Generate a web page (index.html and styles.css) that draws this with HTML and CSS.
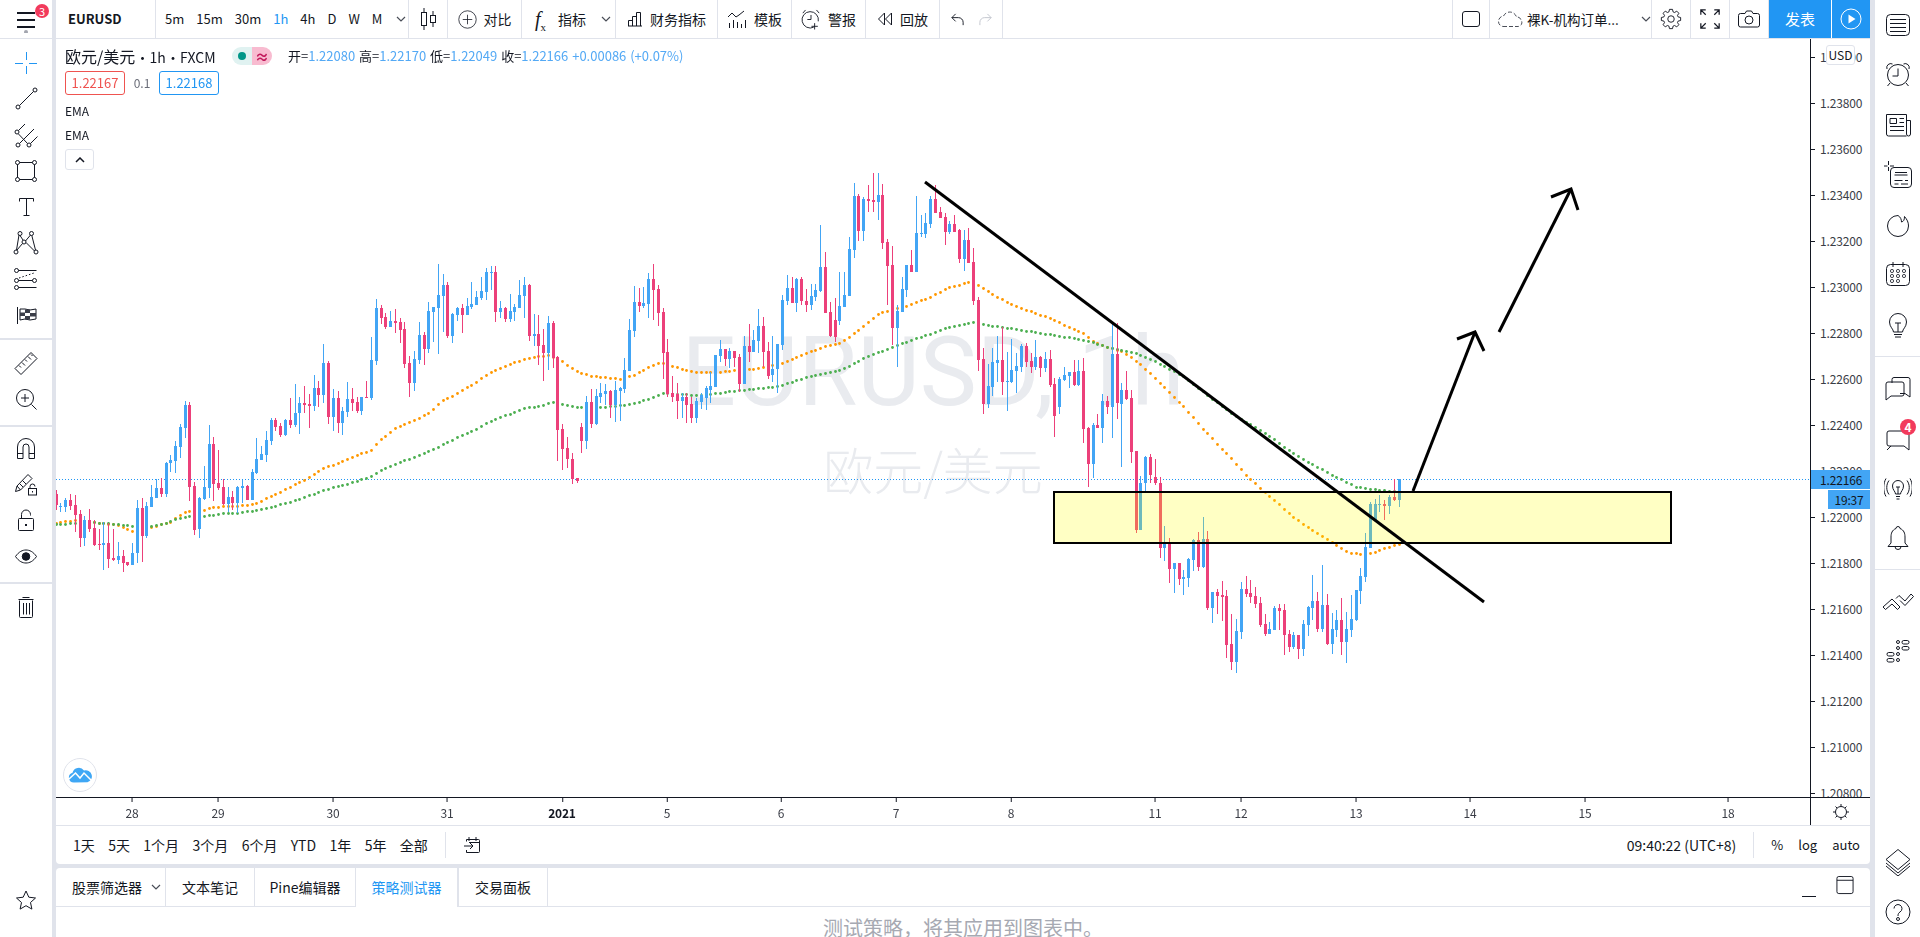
FILE: index.html
```html
<!DOCTYPE html>
<html>
<head>
  <meta charset="UTF-8" />
  <link rel="stylesheet" href="styles.css">
</head>
<body>
  <div class="app">
    <div class="left-col">
      <div class="menu-cell">
        <svg class="menu-icon" width="24" height="28" viewBox="0 0 24 28"><path d="M3 8h18M3 15h18M3 22h18"/><circle cx="12" cy="27" r="2"/></svg>
        <span class="menu-badge">3</span>
      </div>
      <div class="tools">
        <div class="tool-group first">
          <div class="tool"><svg class="ic blue" viewBox="0 0 28 28"><path d="M3 14.5h8M17 14.5h8M14.5 3v8M14.5 17v8"/></svg></div>
          <div class="tool"><svg class="ic" viewBox="0 0 28 28"><circle cx="6" cy="22" r="2"/><circle cx="23" cy="5" r="2"/><path d="M7.5 20.5 21.5 6.5"/></svg></div>
          <div class="tool"><svg class="ic" viewBox="0 0 28 28"><circle cx="5" cy="11" r="2"/><circle cx="6" cy="24" r="2"/><circle cx="17" cy="24" r="2"/><path d="M6.5 9.500 13 3M6.500 13 15.500 22.500M7.500 22.500 22 8M18.500 22.500 25.500 15.500"/></svg></div>
          <div class="tool"><svg class="ic" viewBox="0 0 28 28"><rect x="5.500" y="5.500" width="17" height="17"/><circle cx="5.500" cy="5.500" r="2" class="paper"/><circle cx="22.500" cy="5.500" r="2" class="paper"/><circle cx="5.500" cy="22.500" r="2" class="paper"/><circle cx="22.500" cy="22.500" r="2" class="paper"/></svg></div>
          <div class="tool"><svg class="ic" viewBox="0 0 28 28"><path d="M7.500 8.500V5.500h14v3M14.500 5.500v17M11.500 22.500h6"/></svg></div>
          <div class="tool"><svg class="ic" viewBox="0 0 28 28"><circle cx="8" cy="4.500" r="2"/><circle cx="19.500" cy="4.500" r="2"/><circle cx="12" cy="13" r="2"/><circle cx="4" cy="23" r="2"/><circle cx="24" cy="23" r="2"/><path d="M8 6.500 11 11M18.500 6 13.500 12M5 21 10.500 14.500M7 6 4.500 21M19.800 6.500 23.500 21M14 13.500 22.500 22"/></svg></div>
          <div class="tool"><svg class="ic" viewBox="0 0 28 28"><circle cx="4.500" cy="5.500" r="2"/><circle cx="4.500" cy="15.500" r="2"/><circle cx="4.500" cy="22.500" r="2"/><circle cx="22.500" cy="15.500" r="2"/><path d="M6.500 5.500h18M6.500 22.500h18M6.500 15.500h14"/><path class="dots" d="M7 13 22 8"/></svg></div>
          <div class="tool"><svg class="ic flag" viewBox="0 0 28 28"><path class="pole" d="M5.500 6v17"/><path class="cloth" d="M8 8h5l5 1 6-1v10l-6 1-5-1-5 1z"/><path class="check" d="M8 11.500h5v3.500H8zM13 8.500h5V12h-5zM18 12h6v3.500h-6zM13 15h5v3.500h-5z"/></svg></div>
        </div>
        <div class="tool-group roomy">
          <div class="tool"><svg class="ic" viewBox="0 0 28 28"><path d="M3 19.500 19 3.500l6 6-16 16zM7 16.500l2 2M10 13.500l3 3M13 10.500l2 2M16 7.500l3 3M19 5.500l1.500 1.500"/></svg></div>
          <div class="tool"><svg class="ic" viewBox="0 0 28 28"><circle cx="13" cy="13" r="8.500"/><path d="M13 9v8M9 13h8M19.500 19.500l5 5"/></svg></div>
        </div>
        <div class="tool-group roomy tight-top">
          <div class="tool"><svg class="ic" viewBox="0 0 28 28"><path d="M5.500 24.500V13a8.500 8.500 0 0 1 17 0v11.500h-5.500V13a3 3 0 0 0-6 0v11.500zM5.500 19.500H11M17 19.500h5.500"/></svg></div>
          <div class="tool"><svg class="ic" viewBox="0 0 28 28"><path d="M3.500 21.500 5 16 16 4.500l4 4L8.500 20zM5 16l3.500 4M7.500 13.500l3.500 3.500M10.500 10.500l3.500 3.500"/><rect x="16.500" y="18.500" width="8" height="6.500"/><path d="M18 18.500v-2a2.500 2.500 0 0 1 5 0"/><path d="M20.500 21v1.500"/></svg></div>
          <div class="tool"><svg class="ic" viewBox="0 0 28 28"><rect x="6.500" y="12.500" width="15" height="12" rx="1"/><path d="M9.500 12.500v-4a4.500 4.500 0 0 1 9 0v1"/><path d="M14 18v2" stroke-width="2"/></svg></div>
          <div class="tool"><svg class="ic" viewBox="0 0 28 28"><path d="M3.500 14.500C7 9.500 10.500 8 14 8s7 1.500 10.500 6.500C21 19.500 17.500 21 14 21s-7-1.500-10.500-6.500z"/><circle class="solid" cx="14" cy="14.500" r="3.800"/></svg></div>
        </div>
        <div class="tool-group">
          <div class="tool"><svg class="ic" viewBox="0 0 28 28"><path d="M7.500 7.500v16a1 1 0 0 0 1 1h11a1 1 0 0 0 1-1v-16M6.500 6.500h15M10.500 4.500h7M11.500 10v11.500M14.500 10v11.500M17.500 10v11.500"/></svg></div>
        </div>
        <div class="tool star"><svg class="ic" viewBox="0 0 28 28"><path d="M14 5l2.800 6.200 6.700.8-5 4.500 1.400 6.600L14 19.700l-5.900 3.400 1.400-6.600-5-4.500 6.700-.8z"/></svg></div>
      </div>
    </div>

    <div class="center-col">
      <div class="topbar">
        <div class="seg seg-symbol">EURUSD</div>
        <div class="seg seg-intervals">
          <span>5m</span><span>15m</span><span>30m</span><span class="active">1h</span><span>4h</span><span>D</span><span>W</span><span>M</span>
          <svg class="chev" viewBox="0 0 10 6"><path d="M1 1l4 4 4-4"/></svg>
        </div>
        <div class="seg seg-candle"><svg class="ic" viewBox="0 0 28 28"><path d="M10 3v22M19 6v16"/><rect x="7.500" y="7.500" width="5" height="13" class="paper"/><rect x="16.500" y="10.500" width="5" height="7" class="paper"/></svg></div>
        <div class="seg seg-compare"><svg class="ic" viewBox="0 0 24 24"><circle cx="12" cy="12" r="11"/><path d="M12 6v12M6 12h12"/></svg><span>对比</span></div>
        <div class="seg seg-indicator"><span class="fx">f<sub>x</sub></span><span>指标</span><svg class="chev" viewBox="0 0 10 6"><path d="M1 1l4 4 4-4"/></svg></div>
        <div class="seg seg-financial"><svg class="ic" viewBox="0 0 16 16"><path d="M1.500 15V9.500h4V15M5.500 15V5.500h4V15M9.500 15V1.500h4V15M1 15h14"/></svg><span>财务指标</span></div>
        <div class="seg seg-template"><svg class="ic" viewBox="0 0 20 20"><path d="M1 8l4-4 4 4 3-2 5-4M2.500 19v-5M6.500 19v-8M10.500 19v-6M14.500 19v-4M18.500 19v-8"/></svg><span>模板</span></div>
        <div class="seg seg-alert"><svg class="ic" viewBox="0 0 22 24"><path d="M14 20.500a9 9 0 1 1 5-6.500M11 7v5H7M2 5l3-3.500M20 5l-3-3.500M15 23v-7M11.500 19.500h7"/></svg><span>警报</span></div>
        <div class="seg seg-replay"><svg class="ic" viewBox="0 0 16 16"><path d="M7.500 2 1.500 8l6 6zM14.500 2l-6 6 6 6z"/></svg><span>回放</span></div>
        <div class="seg seg-undo">
          <svg class="ic" viewBox="0 0 16 16"><path d="M6 2 2 6l4 4M2 6h7a5 5 0 0 1 5 5v3"/></svg>
          <svg class="ic faded" viewBox="0 0 16 16"><path d="M10 2l4 4-4 4M14 6H7a5 5 0 0 0-5 5v3"/></svg>
        </div>
        <div class="topbar-fill"></div>
        <div class="seg seg-square"><svg class="ic" viewBox="0 0 20 18"><rect x="1.500" y="1.500" width="17" height="15" rx="2.500"/></svg></div>
        <div class="seg seg-layout">
          <svg class="ic cloud" viewBox="0 0 26 18"><path d="M6 16.500H21a4 4 0 0 0 3-6.500 4 4 0 0 0-4.500-3 7 7 0 0 0-13-1 5.500 5.500 0 0 0-5 5.500 5 5 0 0 0 4.500 5"/></svg>
          <span>裸K-机构订单...</span>
          <svg class="chev" viewBox="0 0 10 6"><path d="M1 1l4 4 4-4"/></svg>
        </div>
        <div class="seg seg-icon"><svg class="ic gear" viewBox="0 0 28 28"><path d="M11.800 6.310 12.360 3.630 15.640 3.630 16.200 6.310 17.880 7.010 20.170 5.510 22.490 7.830 20.990 10.120 21.690 11.800 24.370 12.360 24.370 15.640 21.690 16.200 20.990 17.880 22.490 20.170 20.170 22.490 17.880 20.990 16.200 21.690 15.640 24.370 12.360 24.370 11.800 21.690 10.120 20.990 7.830 22.490 5.510 20.170 7.010 17.880 6.310 16.200 3.630 15.640 3.630 12.360 6.310 11.800 7.010 10.120 5.510 7.830 7.830 5.510 10.120 7.010Z"/><circle cx="14" cy="14" r="3.500"/></svg></div>
        <div class="seg seg-icon"><svg class="ic" viewBox="0 0 18 18"><path d="M1.500 5.500v-4h4M1.500 1.500l4 4M12.500 1.500h4v4M16.500 1.500l-4 4M1.500 12.500v4h4M1.500 16.500l4-4M16.500 12.500v4h-4M16.500 16.500l-4-4"/></svg></div>
        <div class="seg seg-icon"><svg class="ic" viewBox="0 0 22 18"><path d="M7 3.500l1.500-2.500h5L15 3.500h4.500a2 2 0 0 1 2 2V15a2 2 0 0 1-2 2h-17a2 2 0 0 1-2-2V5.500a2 2 0 0 1 2-2z"/><circle cx="11" cy="10" r="4"/></svg></div>
        <div class="publish">发表</div>
        <div class="play"><svg class="ic" viewBox="0 0 22 22"><circle cx="11" cy="11" r="10"/><path class="play-mark" d="M8.500 6.500 15.500 11l-7 4.500z"/></svg></div>
      </div>

      <div class="chart">
        <div class="plot">
          <div class="watermark">
            <div class="wm-main">EURUSD, 1h</div>
            <div class="wm-sub">欧元/美元</div>
          </div>
          <canvas id="plot" width="1754" height="758"></canvas>
          <div class="legend">
            <div class="legend-row">
              <span class="legend-title"><span class="legend-name">欧元/美元</span> · 1h · FXCM</span>
              <span class="pills"><span class="pill-a"><i></i></span><span class="pill-b">≈</span></span>
              <span class="ohlc">
                开=<b>1.22080</b> 高=<b>1.22170</b> 低=<b>1.22049</b> 收=<b>1.22166</b> <b>+0.00086 (+0.07%)</b>
              </span>
            </div>
            <div class="quote-row">
              <span class="quote sell">1.22167</span>
              <span class="spread">0.1</span>
              <span class="quote buy">1.22168</span>
            </div>
            <div class="study">EMA</div>
            <div class="study">EMA</div>
            <div class="collapse"><svg viewBox="0 0 10 6" width="10" height="6"><path d="M1 5l4-4 4 4"/></svg></div>
          </div>
          <div class="chart-logo">
            <svg viewBox="0 0 24 16" width="24" height="16"><path d="M6 15.500a5 5 0 0 1-1.500-9.800A6.500 6.500 0 0 1 16 3.500a5.500 5.500 0 0 1 3.500 11.800z"/><path class="logo-line" d="M1 12 7.500 6l4.500 5 4-5 7 7"/></svg>
          </div>
        </div>
        <div class="price-axis">
          <div class="price-list">
            <span>1.24000</span><span>1.23800</span><span>1.23600</span><span>1.23400</span><span>1.23200</span><span>1.23000</span><span>1.22800</span><span>1.22600</span><span>1.22400</span><span>1.22200</span><span>1.22000</span><span>1.21800</span><span>1.21600</span><span>1.21400</span><span>1.21200</span><span>1.21000</span><span>1.20800</span>
          </div>
          <span class="usd-chip">USD</span>
          <span class="price-tag">1.22166</span>
          <span class="count-tag">19:37</span>
        </div>
        <div class="time-axis">
          <span class="tick" style="left:76px">28</span>
          <span class="tick" style="left:162px">29</span>
          <span class="tick" style="left:277px">30</span>
          <span class="tick" style="left:391px">31</span>
          <span class="tick year" style="left:506px">2021</span>
          <span class="tick" style="left:611px">5</span>
          <span class="tick" style="left:725px">6</span>
          <span class="tick" style="left:840px">7</span>
          <span class="tick" style="left:955px">8</span>
          <span class="tick" style="left:1099px">11</span>
          <span class="tick" style="left:1185px">12</span>
          <span class="tick" style="left:1300px">13</span>
          <span class="tick" style="left:1414px">14</span>
          <span class="tick" style="left:1529px">15</span>
          <span class="tick" style="left:1672px">18</span>
        </div>
        <div class="axis-corner">
          <svg class="ic" viewBox="0 0 18 18"><circle cx="9" cy="9" r="5.500"/><path d="M9 1v2M9 15v2M1 9h2M15 9h2M3.500 3.500l1.500 1.500M13 13l1.500 1.500M3.500 14.500 5 13M13 5l1.500-1.500"/></svg>
        </div>
      </div>

      <div class="rangebar">
        <div class="ranges">
          <span>1天</span><span>5天</span><span>1个月</span><span>3个月</span><span>6个月</span><span>YTD</span><span>1年</span><span>5年</span><span>全部</span>
        </div>
        <div class="range-sep"></div>
        <svg class="ic goto" viewBox="0 0 18 18"><path d="M3.500 5.500V3.500h12a1 1 0 0 1 1 1v11a1 1 0 0 1-1 1h-12V14M6 1v4M13 1v4M6 6.500h10M1 10h9M7 7l3 3-3 3"/></svg>
        <div class="rangebar-fill"></div>
        <span class="clock">09:40:22 (UTC+8)</span>
        <div class="range-sep"></div>
        <div class="scale-opts"><span>%</span><span>log</span><span>auto</span></div>
      </div>

      <div class="bottom-panel">
        <div class="tabs">
          <div class="tab tab-screener">股票筛选器<svg class="chev" viewBox="0 0 10 6"><path d="M1 1l4 4 4-4"/></svg></div>
          <div class="tab tab-notes">文本笔记</div>
          <div class="tab tab-pine">Pine编辑器</div>
          <div class="tab tab-tester active">策略测试器</div>
          <div class="tab tab-trade">交易面板</div>
          <div class="tabs-fill"></div>
          <svg class="ic panel-min" viewBox="0 0 14 14"><path d="M0 13.500h14"/></svg>
          <svg class="ic panel-max" viewBox="0 0 18 20"><rect x="0.500" y="0.500" width="17" height="18" rx="2"/><path d="M0.500 4.500h17"/></svg>
        </div>
        <div class="panel-body">测试策略，将其应用到图表中。</div>
      </div>
    </div>

    <div class="right-col">
      <div class="side-group top">
        <div class="side-btn"><svg class="ic" viewBox="0 0 28 28"><rect x="2.500" y="3.500" width="23" height="21" rx="4"/><path d="M6 8.500h16M6 12.500h16M6 16.500h16M6 20.500h16"/></svg></div>
        <div class="side-btn"><svg class="ic" viewBox="0 0 28 28"><circle cx="14" cy="14" r="10.500"/><path d="M14 7.500v7.500H8.500M3 8a4 4 0 0 1 5.500-5M25 8a4 4 0 0 0-5.500-5M6 22l-2.500 3M22 22l2.500 3"/></svg></div>
        <div class="side-btn"><svg class="ic" viewBox="0 0 28 28"><path d="M22.500 25h-18a2 2 0 0 1-2-2V3.500h20V23a2 2 0 0 0 2 2 2 2 0 0 0 2-2V9.500h-4M6 7.500h6.500v5H6zM15.500 7.500H20M15.500 11.500H20M6 15.500h14M6 19.500h14"/></svg></div>
        <div class="side-btn"><svg class="ic" viewBox="0 0 28 28"><rect x="6.500" y="6.500" width="21" height="20" rx="3.500"/><path d="M11 11.500h12M10.500 14h13M10.500 19.500h8M21 19.500h3M10.500 23h4M17 23h7M4.500 0v4M4.500 6v4M0 5h3.500M6 5h4"/></svg></div>
        <div class="side-btn"><svg class="ic" viewBox="0 0 28 28"><path d="M14 4.500A10.500 10.500 0 1 0 24.500 15c0-4-1.500-6.500-4-9.500 0 3.500-1 5-3 5.500 0-2.500-1-5-3.500-6.500z"/></svg></div>
        <div class="side-btn"><svg class="ic" viewBox="0 0 28 28"><rect x="2.500" y="3.500" width="23" height="21" rx="4"/><path d="M9 1v5M19 1v5"/><g class="solid-dots"><circle cx="8" cy="10" r="1.600"/><circle cx="14" cy="10" r="1.600"/><circle cx="20" cy="10" r="1.600"/><circle cx="8" cy="15" r="1.600"/><circle cx="14" cy="15" r="1.600"/><circle cx="20" cy="15" r="1.600"/><circle cx="8" cy="20" r="1.600"/><circle cx="14" cy="20" r="1.600"/></g></svg></div>
        <div class="side-btn"><svg class="ic" viewBox="0 0 28 28"><path d="M9.500 21c0-3-4-5-4-10a8.500 8.500 0 0 1 17 0c0 5-4 7-4 10zM14 21v-9M11 12h6M10 23.500h8M11 26h6"/></svg></div>
      </div>
      <div class="side-group">
        <div class="side-btn"><svg class="ic" viewBox="0 0 28 28"><path d="M8 9V5.500a2 2 0 0 1 2-2h14a2 2 0 0 1 2 2V23l-5-3.500H16M2 10a2 2 0 0 1 2-2h14a2 2 0 0 1 2 2v10a2 2 0 0 1-2 2H7l-5 4z"/></svg></div>
        <div class="side-btn">
          <svg class="ic" viewBox="0 0 28 28"><path d="M25 26l-5-4H5a2 2 0 0 1-2-2V9a2 2 0 0 1 2-2h18a2 2 0 0 1 2 2z M3 26l4-4"/></svg>
          <span class="side-badge">4</span>
        </div>
        <div class="side-btn"><svg class="ic" viewBox="0 0 28 28"><path d="M11.500 20c0-2.500-3-4-3-8a5.500 5.500 0 0 1 11 0c0 4-3 5.500-3 8zM14 20v-7M12 13h4M12 22.500h4M12.500 25h3M5 6.500c-3 4-3 10 0 14M2 4.500c-3 5-3 13 0 18M23 6.500c3 4 3 10 0 14M26 4.500c3 5 3 13 0 18"/></svg></div>
        <div class="side-btn"><svg class="ic" viewBox="0 0 28 28"><path d="M14 2.500a2 2 0 0 0-2 2C8 6 7 9.500 7 13v6l-3 3.500h20L21 19v-6c0-3.500-1-7-5-8.500a2 2 0 0 0-2-2zM11 22.500a3 3 0 0 0 6 0"/></svg></div>
      </div>
      <div class="side-group">
        <div class="side-btn"><svg class="ic wide" viewBox="0 0 32 24"><path d="M1 18 10 10l8 8-2.500 2.500L10 15l-6.500 5.500zM14 9.500l3-3 6 5.500 6-7 2.500 2.500-8.500 9-5-5"/></svg></div>
        <div class="side-btn"><svg class="ic" viewBox="0 0 28 28"><rect x="18" y="3.500" width="7" height="3.500" rx="1.700"/><rect x="18" y="9.500" width="7" height="3.500" rx="1.700"/><rect x="3" y="15.500" width="7" height="3.500" rx="1.700"/><rect x="3" y="21.500" width="7" height="3.500" rx="1.700"/><circle cx="14" cy="5" r="1.500"/><circle cx="14" cy="11" r="1.500"/><circle cx="14" cy="17" r="1.500"/><circle cx="14" cy="23" r="1.500"/></svg></div>
      </div>
      <div class="side-group bottom">
        <div class="side-btn"><svg class="ic" viewBox="0 0 28 28"><path d="M14 1.500 26 11.500 14 21.500 2 11.500zM2 15 14 25 26 15M2 18 14 28 26 18"/></svg></div>
        <div class="side-btn"><svg class="ic" viewBox="0 0 28 28"><circle cx="14" cy="14" r="12"/><path d="M10 10.500a4 4 0 1 1 6 3.500c-1.500 1-2 2-2 4"/><circle cx="14" cy="21" r="1.500"/></svg></div>
      </div>
    </div>
  </div>

  <script src="chart.js"></script>
</body>
</html>
```

FILE: styles.css
```css
:root {
  --gap-color: #e0e3eb;
  --line-color: #e0e3eb;
  --text-color: #131722;
  --blue: #2196f3;
}

* {
  box-sizing: border-box;
}

html, body {
  margin: 0;
  height: 100%;
  overflow: hidden;
}

body {
  font-family: "Noto Sans CJK SC", Roboto, sans-serif;
  font-size: 14px;
  line-height: 20px;
  color: var(--text-color);
  background: var(--gap-color);
}

.app {
  display: flex;
  height: 937px;
  width: 1920px;
}

.ic {
  display: block;
  fill: none;
  stroke: currentColor;
  stroke-width: 1;
  flex: none;
}

.chev {
  width: 10px;
  height: 6px;
  fill: none;
  stroke: #4a4e58;
  stroke-width: 1.2;
  flex: none;
}

.paper {
  fill: #fff;
}

/* left column */
.left-col {
  width: 52px;
  margin-right: 4px;
  display: flex;
  flex-direction: column;
}

.menu-cell {
  position: relative;
  height: 38px;
  margin-bottom: 1px;
  background: #fff;
}

.menu-icon {
  position: absolute;
  left: 14px;
  top: 5px;
  fill: none;
  stroke: var(--text-color);
  stroke-width: 2;
}

.menu-icon circle {
  fill: #a3a6af;
  stroke: none;
}

.menu-badge {
  position: absolute;
  left: 35px;
  top: 4px;
  width: 14px;
  height: 14px;
  border-radius: 50%;
  background: #f23a5c;
  color: #fff;
  font-size: 11px;
  line-height: 14px;
  text-align: center;
}

.tools {
  flex: 1;
  background: #fff;
  display: flex;
  flex-direction: column;
  padding-top: 1px;
}

.tool-group {
  padding: 5px 0;
  border-bottom: 2px solid var(--line-color);
}

.tool-group.roomy {
  padding-bottom: 8px;
}

.tool-group.tight-top {
  padding-top: 3px;
}

.tool-group:nth-child(4) {
  border-bottom: none;
}

.tool {
  height: 36px;
  display: flex;
  align-items: center;
  justify-content: center;
}

.tool .ic {
  width: 28px;
  height: 28px;
}

.tool.star {
  margin-top: auto;
  margin-bottom: 19px;
}

.blue {
  color: var(--blue);
}

.dots {
  stroke-dasharray: 1.5 2;
}

.solid {
  fill: var(--text-color);
}

.flag .cloth {
  fill: #fff;
}

.flag .check {
  fill: #3a3d48;
  stroke: none;
}

/* center column */
.center-col {
  flex: none;
  width: 1814px;
  display: flex;
  flex-direction: column;
}

.topbar {
  height: 38px;
  margin-bottom: 1px;
  display: flex;
  background: #fff;
  white-space: nowrap;
}

.seg {
  display: flex;
  align-items: center;
  justify-content: center;
  border-right: 1px solid var(--line-color);
  gap: 7px;
  flex: none;
}

.seg-symbol {
  width: 100px;
  justify-content: flex-start;
  padding-left: 12px;
  font-weight: 700;
  font-size: 13px;
}

.seg-intervals {
  width: 253px;
  justify-content: flex-start;
  padding-left: 9px;
  gap: 12px;
  font-size: 13px;
}

.seg-intervals .active {
  color: var(--blue);
}

.seg-intervals .chev {
  margin-left: 2px;
}

.seg-candle {
  width: 39px;
}

.seg-candle .ic {
  width: 28px;
  height: 28px;
}

.seg-compare {
  width: 74px;
}

.seg-compare .ic {
  width: 19px;
  height: 19px;
}

.seg-indicator {
  width: 94px;
  gap: 8px;
  justify-content: flex-start;
  padding-left: 13px;
}

.seg-indicator .chev {
  margin-left: 7px;
}

.fx {
  font-family: "Liberation Serif", serif;
  font-style: italic;
  font-size: 20px;
  width: 15px;
}

.fx sub {
  font-size: 11px;
  font-style: normal;
  line-height: 0;
}

.seg-financial {
  width: 102px;
}

.seg-financial .ic {
  width: 16px;
  height: 16px;
}

.seg-template {
  width: 74px;
}

.seg-template .ic {
  width: 20px;
  height: 20px;
}

.seg-alert {
  width: 74px;
}

.seg-alert .ic {
  width: 20px;
  height: 23px;
}

.seg-replay {
  width: 74px;
}

.seg-replay .ic {
  width: 16px;
  height: 16px;
}

.seg-undo {
  width: 63px;
  gap: 13px;
}

.seg-undo .ic {
  width: 15px;
  height: 15px;
}

.faded {
  color: #c1c4cd;
}

.topbar-fill {
  flex: 1;
}

.seg-square {
  width: 38px;
  border-left: 1px solid var(--line-color);
}

.seg-square .ic {
  width: 20px;
  height: 18px;
}

.seg-layout {
  width: 162px;
  justify-content: flex-start;
  padding-left: 7px;
  gap: 4px;
}

.seg-layout span {
  width: 94px;
  font-size: 13.500px;
}

.seg-layout .chev {
  margin-left: 17px;
}

.cloud {
  width: 26px;
  height: 18px;
  stroke-dasharray: 4 2;
  color: #4a4e58;
}

.seg-icon {
  width: 39px;
}

.seg-icon .ic {
  width: 22px;
  height: 22px;
}

.seg-icon .gear {
  width: 26px;
  height: 26px;
}

.publish {
  width: 63px;
  background: var(--blue);
  color: #fff;
  font-size: 15px;
  display: flex;
  align-items: center;
  justify-content: center;
  flex: none;
  border-right: 1px solid #fff;
}

.play {
  width: 38px;
  background: var(--blue);
  display: flex;
  align-items: center;
  justify-content: center;
  color: #fff;
  flex: none;
}

.play .ic {
  width: 22px;
  height: 22px;
}

.play-mark {
  fill: #fff;
  stroke: none;
}

/* chart */
.chart {
  display: grid;
  grid-template-columns: 1754px 60px;
  grid-template-rows: 759px 27px;
  background: #fff;
}

.plot {
  position: relative;
  overflow: hidden;
  border-bottom: 1px solid #131722;
}

#plot {
  position: absolute;
  left: 0;
  top: 0;
}

.watermark {
  position: absolute;
  left: 0;
  right: 0;
  top: 278px;
  text-align: center;
  color: #e9ebef;
}

.wm-main {
  font-family: Roboto, sans-serif;
  font-size: 96px;
  line-height: 110px;
}

.wm-sub {
  font-size: 50px;
  line-height: 68px;
  font-weight: 300;
  margin-top: 7px;
}

.legend {
  position: absolute;
  left: 9px;
  top: 7px;
  display: flex;
  flex-direction: column;
  align-items: flex-start;
}

.legend-row {
  height: 20px;
  display: flex;
  align-items: center;
  white-space: nowrap;
}

.legend-title {
  font-size: 14px;
  width: 167px;
  word-spacing: -3px;
}

.legend-name {
  font-size: 16px;
}

.pills {
  display: flex;
  width: 40px;
  height: 18px;
  margin-right: 16px;
  border-radius: 9px;
  overflow: hidden;
}

.pill-a {
  flex: 1;
  background: #e0f2f1;
  display: flex;
  align-items: center;
  justify-content: center;
}

.pill-a i {
  width: 8px;
  height: 8px;
  border-radius: 50%;
  background: #009688;
}

.pill-b {
  flex: 1;
  background: #f8bbd0;
  color: #c2185b;
  font-size: 14px;
  font-weight: 700;
  line-height: 18px;
  text-align: center;
}

.ohlc {
  font-size: 13px;
  word-spacing: 1px;
}

.ohlc b {
  font-weight: 400;
  color: #53a9f5;
}

.quote-row {
  display: flex;
  align-items: center;
  margin-top: 5px;
  height: 24px;
}

.quote {
  width: 60px;
  height: 24px;
  border: 1px solid;
  border-radius: 3px;
  font-size: 13px;
  line-height: 22px;
  text-align: center;
  background: #fff;
}

.quote.sell {
  color: #ef5350;
}

.quote.buy {
  color: var(--blue);
}

.spread {
  font-size: 12px;
  color: #6a6d78;
  width: 34px;
  text-align: center;
}

.study {
  height: 24px;
  line-height: 24px;
  font-size: 12px;
}

.quote-row + .study {
  margin-top: 4px;
}

.collapse {
  width: 29px;
  height: 21px;
  margin-top: 2px;
  border: 1px solid var(--line-color);
  border-radius: 3px;
  background: #fff;
  display: flex;
  align-items: center;
  justify-content: center;
}

.collapse svg {
  fill: none;
  stroke: var(--text-color);
  stroke-width: 1.500;
}

.chart-logo {
  position: absolute;
  left: 7px;
  top: 719px;
  width: 34px;
  height: 34px;
  border: 1px solid var(--line-color);
  border-radius: 50%;
  background: #fff;
  display: flex;
  align-items: center;
  justify-content: center;
}

.chart-logo path {
  fill: #3fa7f5;
}

.chart-logo .logo-line {
  fill: none;
  stroke: #fff;
  stroke-width: 1.500;
}

.price-axis {
  position: relative;
  overflow: hidden;
  border-left: 1px solid #131722;
  border-bottom: 1px solid #131722;
}

.price-list {
  margin-top: -5px;
  display: flex;
  flex-direction: column;
}

.price-list span {
  height: 46px;
  display: flex;
  align-items: center;
  gap: 5px;
  font-size: 12px;
  letter-spacing: -0.150px;
  color: #3a3d46;
}

.price-list span::before {
  content: "";
  width: 4px;
  height: 1px;
  background: #131722;
}

.usd-chip {
  position: absolute;
  left: 15px;
  top: 6px;
  width: 29px;
  height: 20px;
  border: 1px solid var(--line-color);
  border-radius: 3px;
  background: #fff;
  font-size: 12px;
  line-height: 18px;
  text-align: center;
}

.price-tag,
.count-tag {
  position: absolute;
  right: 0;
  height: 19px;
  background: #42a5f5;
  font-size: 12px;
  line-height: 19px;
  letter-spacing: -0.150px;
  color: #131722;
}

.price-tag {
  top: 431px;
  left: 0;
  padding-left: 9px;
}

.count-tag {
  top: 451px;
  width: 42px;
  text-align: center;
}

.time-axis {
  position: relative;
  background: #fff;
}

.tick {
  position: absolute;
  top: 5px;
  transform: translateX(-50%);
  font-size: 12px;
  line-height: 20px;
  letter-spacing: -0.200px;
  color: #3a3d46;
}

.tick::before {
  content: "";
  position: absolute;
  left: 50%;
  top: -5px;
  width: 1px;
  height: 4px;
  background: #131722;
}

.tick.year {
  font-weight: 700;
  color: #131722;
}

.axis-corner {
  border-left: 1px solid #131722;
  background: #fff;
  display: flex;
  align-items: center;
  justify-content: center;
}

.axis-corner .ic {
  width: 18px;
  height: 18px;
}

/* range bar */
.rangebar {
  height: 39px;
  border-top: 1px solid var(--line-color);
  background: #fff;
  border-radius: 0 0 4px 4px;
  display: flex;
  align-items: center;
  font-size: 14px;
  padding-left: 17px;
  margin-bottom: 4px;
  white-space: nowrap;
}

.ranges {
  display: flex;
  gap: 13.400px;
}

.range-sep {
  width: 1px;
  height: 26px;
  background: var(--line-color);
  margin: 0 17px;
}

.goto {
  width: 18px;
  height: 18px;
}

.rangebar-fill {
  flex: 1;
}

.scale-opts {
  display: flex;
  gap: 15px;
  padding-right: 10px;
  font-size: 13px;
}

/* bottom panel */
.bottom-panel {
  flex: 1;
  background: #fff;
  border-radius: 4px 4px 0 0;
  display: flex;
  flex-direction: column;
  overflow: hidden;
}

.tabs {
  height: 39px;
  display: flex;
  align-items: center;
  border-bottom: 1px solid var(--line-color);
}

.tab {
  height: 100%;
  display: flex;
  align-items: center;
  justify-content: center;
  border-right: 1px solid var(--line-color);
  gap: 10px;
  flex: none;
}

.tab-screener { width: 110px; padding-left: 16px; gap: 9px; justify-content: flex-start; }
.tab-notes { width: 89px; }
.tab-pine { width: 101px; }
.tab-tester { width: 103px; }
.tab-trade { width: 89px; }

.tab.active {
  color: var(--blue);
  background: #fff;
  height: 39px;
  border-right-width: 2px;
}

.tabs-fill {
  flex: 1;
}

.panel-min {
  width: 14px;
  height: 14px;
  margin-right: 20px;
  margin-top: 5px;
}

.panel-max {
  width: 18px;
  height: 19px;
  margin-right: 16px;
  margin-top: -4px;
}

.panel-body {
  flex: 1;
  padding-top: 7px;
  text-align: center;
  font-size: 20px;
  line-height: 28px;
  color: #a6a9b2;
  white-space: nowrap;
}

/* right column */
.right-col {
  flex: none;
  width: 45px;
  margin-left: 5px;
  background: #fff;
  display: flex;
  flex-direction: column;
}

.side-group {
  padding: 6px 0;
  border-bottom: 1px solid var(--line-color);
}

.side-group.top {
  padding-top: 0;
}

.side-group:nth-child(3) {
  border-bottom: none;
}

.side-group.bottom {
  margin-top: auto;
  padding: 0;
  border: none;
}

.side-btn {
  position: relative;
  height: 50px;
  display: flex;
  align-items: center;
  justify-content: center;
}

.side-btn .ic {
  width: 28px;
  height: 28px;
}

.side-btn .ic.wide {
  width: 32px;
  height: 24px;
}

.side-badge {
  position: absolute;
  left: 25px;
  top: 6px;
  width: 16px;
  height: 16px;
  border-radius: 50%;
  background: #f23a5c;
  color: #fff;
  font-size: 12px;
  line-height: 16px;
  text-align: center;
  font-weight: 700;
}

.solid-dots circle {
  stroke: #131722;
  stroke-width: 0.800;
}
```

FILE: chart.js
```js
const canvas = document.getElementById('plot');
const ctx = canvas.getContext('2d');

// candles: [up, wickTop, bodyTop, bodyBottom, wickBottom]
const early = [
  [0,960,972,1005,1020],
  [1,1000,1007,1010,1025],[1,985,990,1010,1025],[0,972,990,1008,1020],[0,975,1005,1035,1085],[0,1020,1032,1103,1130],
  [1,1038,1050,1103,1127],[0,1017,1050,1077,1085],[0,1050,1075,1125,1127],[0,1077,1122,1125,1140],[1,1055,1120,1125,1200],
  [0,1060,1120,1166,1193],[0,1077,1164,1170,1172],[1,1117,1158,1170,1182],[0,1140,1158,1178,1205],[0,1175,1177,1185,1188],
  [1,1120,1150,1185,1185],[1,990,1015,1150,1178],[0,985,1015,1097,1175],[1,995,1008,1097,1103],[1,945,982,1010,1012],
  [1,927,955,983,985],[0,925,955,972,980],[1,877,880,972,980],[1,855,870,880,905],[1,813,828,873,908],
  [1,763,770,830,865],[1,693,705,773,803],[0,697,705,950,993],[0,937,948,1080,1095],[1,982,985,1078,1103],
  [1,888,950,987,990],[1,765,822,953,985],[0,800,822,942,993],[0,840,940,955,960],[0,928,950,1002,1005],
  [1,950,980,1003,1025],[0,962,980,1000,1020],[1,947,950,1000,1030],[1,930,948,955,1000],[0,945,948,990,990],
  [1,898,906,990,990],[1,805,867,910,912],[1,828,852,870,870],[1,783,810,855,875],[1,745,750,813,825],
  [0,745,750,770,783],[0,758,768,795,800],[1,747,750,795,797],[0,685,750,765,775],[1,642,728,765,770],
  [1,680,698,730,792],[0,648,698,705,730],[0,672,702,708,773],[1,615,654,708,722],[0,633,654,675,710],
  [1,522,578,675,698],[0,573,578,740,762],[1,657,685,740,782],[0,663,685,758,790],[1,712,723,758,795],
  [1,636,687,725,740],[0,655,687,698,722],[0,680,695,723,730],[1,682,682,723,735],[0,633,681,684,685],
  [1,502,570,684,690],[1,387,414,572,585],[0,405,414,443,462],[0,430,441,470,478],[1,423,453,470,472],
  [0,418,453,460,490],[0,445,456,480,518],[0,455,477,582,595],[0,558,580,638,680],[1,543,568,638,663],
  [1,456,495,570,582],[0,487,495,537,585],[1,395,423,537,550],[1,410,411,426,515],[1,282,375,413,551],
  [1,312,345,378,485],[0,337,345,498,503],[1,430,432,498,518],[1,410,415,435,452],[0,403,415,435,488],
  [1,384,408,435,435],[1,336,402,410,416],[1,363,380,405,405],[1,322,363,385,390],[1,293,306,365,390],
  [1,287,305,308,360],[0,288,306,425,455],[1,393,414,425,445],[0,410,414,447,455],[1,372,422,447,455],
  [1,402,411,425,452],[1,330,375,413,415],[1,322,345,378,443],[0,343,345,497,513],[1,432,492,498,528],
  [0,435,492,528,585],[0,477,525,548,632],[1,438,459,548,600],[0,453,459,563,593],[0,558,560,780,873],
  [0,762,777,836,900],[0,800,834,868,893],[0,850,866,927,942],[0,925,925,934,938],[0,758,771,813,850],
  [1,678,696,813,837],[0,658,696,762,775],[1,657,678,762,765],[1,640,669,681,700],[1,643,663,672,705],
  [0,660,663,705,743],[1,632,660,705,755],[1,650,655,663,752],[1,565,600,657,670],[1,447,480,602,603],
  [1,348,396,483,500],[0,353,396,408,425],[1,352,400,408,413],[1,310,327,403,445],[0,282,327,360,450],
  [0,345,357,428,467],[0,415,426,548,627],[0,507,546,672,680],[0,618,670,680,697],[0,640,672,692,748],
  [1,670,680,692,743],[0,670,680,705,758],[0,680,702,743,760],[1,685,693,743,760],
  [1,670,675,695,718],[1,648,655,685,720],[1,605,648,660,700],[1,555,555,650,650],[1,510,537,557,575],
  [0,537,537,567,587],[1,535,543,567,595],[0,545,543,563,590],[0,553,561,642,665],[1,498,528,642,640],
  [0,462,528,546,575],[1,480,510,546,545],[1,417,467,512,550],[0,440,468,545,590],[0,515,543,618,628],
  [1,497,597,615,637],[1,522,522,598,670],[1,376,390,525,540],[1,315,353,392,405],[0,320,355,398,400],
  [1,323,326,398,425],[0,320,328,392,405],[0,357,392,404,425],[1,342,378,404,420],[1,342,360,380,392],
  [1,165,292,362,365],[0,245,292,428,430],[0,395,426,498,500],[0,385,450,502,515],[1,305,408,452,465],
  [1,305,376,410,412],[1,200,237,377,378],[1,40,78,240,265],[0,72,78,183,212],[1,82,87,183,212],
  [0,45,88,92,125],[0,10,90,95,125],[1,10,75,95,150],[0,42,75,218,238],[0,208,216,288,405],
  [0,228,286,475,525],[1,405,422,475,590],[1,322,358,425,425],[1,285,285,360,380],[0,240,285,305,305],
  [1,78,190,305,305],[1,135,188,192,200],[1,130,160,192,205],[1,78,87,162,175],[0,45,88,128,128],
  [0,110,127,143,145],[0,130,142,185,225],[1,153,163,187,192],[0,135,162,185,185],[0,178,180,267,280],
  [1,180,210,267,302],[0,175,210,280,280],[0,235,276,392,405],[0,382,390,570,603],[0,535,568,702,732],
  [1,582,648,702,713],[1,535,576,650,678],[1,498,570,580,635],[0,472,570,635,675],[1,545,632,636,722],
  [1,508,600,636,638],[1,548,588,603,668],[1,522,528,590,605],[0,520,528,575,590],[0,550,573,590,608],
  [1,510,560,590,600],[0,557,560,595,622],[1,545,568,595,605],[0,540,568,645,652],[0,625,642,738,800],
  [1,622,628,710,732],[1,592,615,630,632],[1,605,607,617,655],[0,570,605,645,648],[1,570,603,645,648],
  [0,565,603,777,820],[0,770,775,882,950],[1,760,765,882,925],[0,732,765,773,775],[1,672,693,773,820],
  [0,678,693,710,732],[1,458,552,710,805],[0,460,552,700,748],[1,640,660,702,890],[0,603,660,687,690],
  [0,660,684,845,880],[0,843,843,1080,1090],[1,918,940,1080,1080],[1,857,860,940,965],[0,852,860,915,940],
  [0,868,922,940,945]
];

const late = [
  [0,140,158,353,383],[1,288,338,353,392],[0,325,340,417,460],[1,400,400,417,490],[0,398,400,447,465],
  [1,420,441,447,495],[1,385,387,443,470],[1,327,330,390,422],[0,305,330,410,422],[1,262,327,410,415],
  [0,303,327,533,540],[1,487,487,533,578],[0,478,487,497,552],[0,453,495,500,572],[0,480,498,645,683],
  [0,553,642,695,720],[1,567,603,695,730],[1,456,478,605,627],[0,438,478,492,500],[0,450,490,500,518],
  [0,472,498,522,535],[0,502,520,585,590],[0,552,583,612,617],[1,575,597,612,613],[1,528,534,600,600],
  [0,522,534,542,600],[0,522,540,615,675],[0,600,612,650,667],[1,605,615,650,657],[0,615,615,657,687],
  [1,570,582,657,677],[1,528,531,585,617],[1,435,513,533,570],[0,487,513,598,605],[1,405,525,597,605],
  [0,492,525,642,645],[1,548,597,642,672],[1,540,570,600,622],[0,503,570,635,675],[1,545,597,635,698],
  [1,495,567,600,622],[1,480,480,570,572],[1,415,438,483,522],[1,308,350,441,455],[1,215,222,353,355],
  [1,207,222,270,268],[1,195,222,225,247],[0,210,222,228,270],[1,195,200,227,252],[0,148,200,210,212],
  [1,148,148,210,230]
];

const orange = [
  [56,523],[60,522],[74,520],[89,522],[103,523],[117,525],[132,531],[151,527],[170,522],[182,513],[191,511],[203,510],
  [213,507],[227,506],[247,505],[256,503],[271,496],[289,487],[305,479],[323,468],[338,463],[356,455],[371,450],
  [380,440],[395,428],[414,420],[428,413],[442,401],[457,393],[476,382],[490,372],[509,364],[524,359],[538,356],
  [548,355],[562,361],[576,371],[591,376],[605,377],[619,379],[634,375],[648,367],[658,363],[663,363],[672,366],
  [691,371],[700,372],[720,372],[735,370],[749,369],[765,367],[782,363],[807,353],[822,347],[839,343],[853,334],
  [865,324],[880,312],[904,307],[929,297],[949,287],[969,282],[978,285],[994,295],[1018,307],[1047,317],[1069,327],
  [1084,333],[1094,342],[1108,347],[1124,352],[1141,365],[1157,380],[1180,403],[1207,433],[1227,454],[1246,475],
  [1260,488],[1274,500],[1293,517],[1312,530],[1332,542],[1347,552],[1360,554],[1370,553],[1380,550],[1393,545],[1402,543]
];

const green = [
  [56,524],[92,522],[103,523],[117,524],[132,526],[151,526],[165,523],[175,519],[189,516],[204,516],[223,513],[237,513],
  [256,510],[271,507],[285,503],[305,497],[323,490],[342,485],[356,481],[371,476],[387,467],[405,460],[419,455],
  [438,447],[457,437],[476,429],[490,421],[509,414],[524,408],[538,406],[553,402],[567,405],[576,407],[591,407],
  [605,407],[624,405],[638,402],[653,397],[663,393],[677,394],[700,395],[724,392],[753,389],[778,386],[806,377],
  [843,369],[863,358],[892,347],[920,337],[949,327],[973,322],[982,324],[1002,327],[1035,332],[1067,337],[1086,340],
  [1108,347],[1133,352],[1157,362],[1186,378],[1210,397],[1231,413],[1265,433],[1293,453],[1323,470],[1342,480],
  [1357,487],[1373,489],[1393,491],[1402,491]
];

const STEP = 4.779;
const FIRST_X = 55.62;
const BLUE = '#42a5f5';
const PINK = '#ec407a';

// the plot starts at (56, 39) on the page, all data above is in page pixels
ctx.translate(-56, -39);

function barX(i) {
  return Math.round(FIRST_X + i * STEP);
}

function yAt(points, x) {
  for (let i = 1; i < points.length; i++) {
    if (x <= points[i][0]) {
      const [x0, y0] = points[i - 1];
      const [x1, y1] = points[i];
      return y0 + (y1 - y0) * (x - x0) / (x1 - x0);
    }
  }
  return points[points.length - 1][1];
}

function drawEma(points, color) {
  ctx.fillStyle = color;
  for (let i = 0; i < early.length + late.length; i++) {
    const x = barX(i);
    ctx.beginPath();
    ctx.arc(x + 0.5, Math.round(yAt(points, x)) + 0.5, 1.4, 0, Math.PI * 2);
    ctx.fill();
  }
}

function drawCandle(c, i, base) {
  const x = barX(i);
  const py = v => Math.round(base + v / 3);
  ctx.fillStyle = c[0] ? BLUE : PINK;
  ctx.fillRect(x, py(c[1]), 1, Math.max(py(c[4]) - py(c[1]), 1));
  ctx.fillRect(x - 1, py(c[2]), 3, Math.max(py(c[3]) - py(c[2]), 1));
}

function line(points, width) {
  ctx.beginPath();
  points.forEach(([x, y], i) => (i ? ctx.lineTo(x, y) : ctx.moveTo(x, y)));
  ctx.lineWidth = width;
  ctx.stroke();
}

// last price line
ctx.strokeStyle = '#2196f3';
ctx.setLineDash([1, 2]);
line([[56, 479.5], [1811, 479.5]], 1);
ctx.setLineDash([]);

drawEma(orange, '#ff9800');
drawEma(green, '#4caf50');

early.forEach((c, i) => drawCandle(c, i, 170));
late.forEach((c, i) => drawCandle(c, early.length + i, 430));

// hand drawn tools
ctx.strokeStyle = '#000';
ctx.fillStyle = 'rgba(255, 255, 0, 0.23)';
ctx.fillRect(1054, 492, 617, 51);
ctx.lineWidth = 2;
ctx.strokeRect(1054, 492, 617, 51);

line([[925, 182], [1484, 602]], 3);
line([[1413, 491], [1475, 332]], 3);
line([[1457, 339], [1475, 332], [1484, 351]], 3);
line([[1499, 332], [1571, 189]], 3);
line([[1551, 197], [1571, 189], [1578, 210]], 3);
```
